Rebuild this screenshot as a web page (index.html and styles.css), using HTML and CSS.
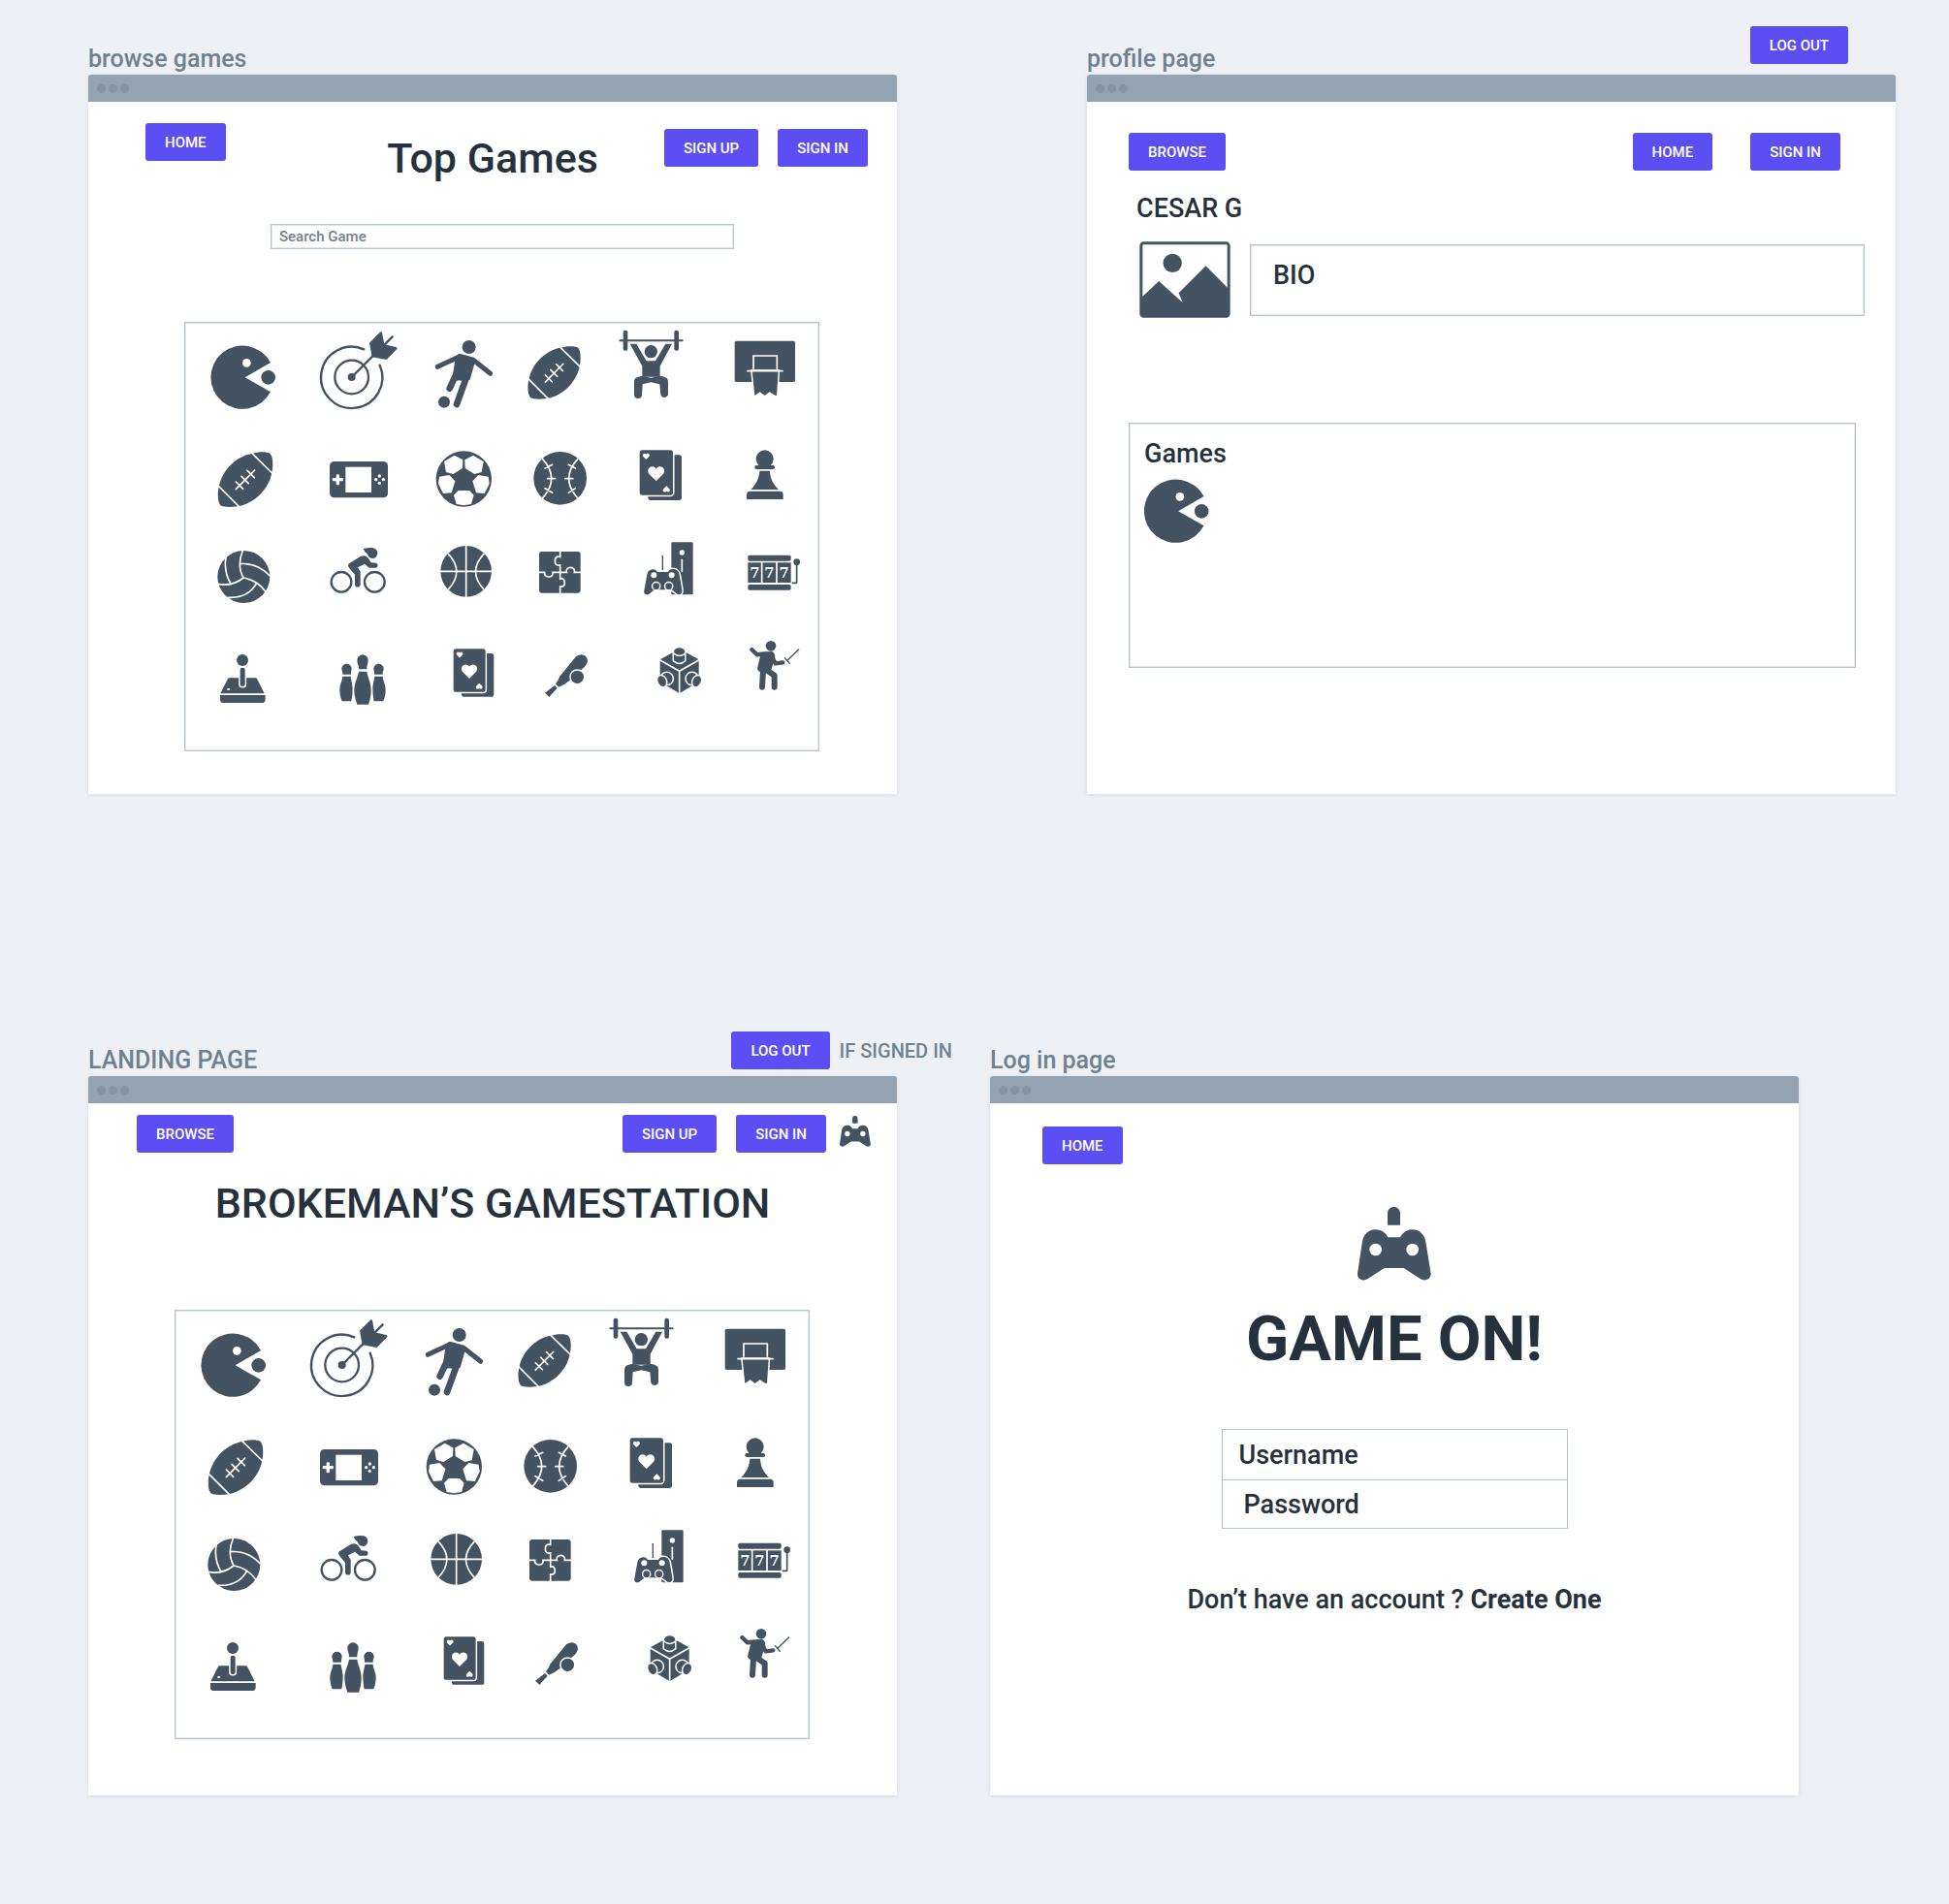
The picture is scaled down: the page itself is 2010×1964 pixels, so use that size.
FILE: index.html
```html
<!DOCTYPE html>
<html lang="en">
<head>
<meta charset="utf-8">
<meta name="viewport" content="width=device-width, initial-scale=1">
<title>Brokeman's Gamestation wireframes</title>
<link rel="stylesheet" href="styles.css">
</head>
<body>
<svg class="sprite" aria-hidden="true">
  <defs>
    <g id="football-shape">
      <path d="M243 443C260 437 285 437 295 443C305 452 306 480 301 503C290 560 240 600 196 607C170 611 150 609 142 604C132 592 133 560 138 543C150 490 195 450 243 443Z"/>
      <path class="cut" d="M240 443L302 504M136 544L199 607M190 554L248 495M190 531L212 553M207 514L229 536M225 496L247 518"/>
    </g>
    <path id="heart-shape" d="M500 529L479 508C470 498 477 484 488 484C494 484 498 487 500 491C502 487 506 484 512 484C523 484 531 498 521 508Z"/>
    <g id="cards-shape">
      <rect x="475" y="448" width="104" height="140" rx="8"/>
      <rect class="lift" x="449" y="433" width="103" height="139" rx="8"/>
      <g fill="#fff">
        <use href="#heart-shape"/>
        <use href="#heart-shape" transform="translate(259 240) scale(.42)"/>
        <use href="#heart-shape" transform="translate(742 766) scale(-.42)"/>
      </g>
    </g>
    <g id="pin-shape">
      <path d="M520 467C521 458 517 455 517 449a15 14 0 0 1 31 0C548 455 545 458 546 467Z"/>
      <path d="M520 473H545C546 485 550 492 551 510C551 525 549 540 547 550H518C514 540 511 528 511 515C511 498 519 487 520 473Z"/>
    </g>
    <g id="stud-shape">
      <circle class="lift" cx="533" cy="480" r="18"/>
      <ellipse class="lift" cx="518" cy="488" rx="12" ry="17" transform="rotate(-25 518 488)"/>
    </g>
    <g id="muncher-shape">
      <path d="M297 162A98 98 0 1 0 297 253L218 208Z"/>
      <circle cx="290" cy="208" r="22"/>
      <circle cx="223" cy="163" r="13" fill="#fff"/>
    </g>
    <g id="slots-shape">
      <rect x="784" y="98" width="133" height="18" rx="5"/>
      <rect x="784" y="121" width="133" height="62"/>
      <rect x="784" y="189" width="133" height="17" rx="5"/>
      <path class="cut" stroke-width="5" d="M827 121V183M873 121V183"/>
      <circle cx="935" cy="119" r="10"/>
      <path class="line" stroke-width="5" d="M935 128V184H922"/>
    </g>
  </defs>

  <symbol id="muncher" viewBox="33 39 348 330"><use href="#muncher-shape"/></symbol>
  <symbol id="muncher-tight" viewBox="113 108 200 198"><use href="#muncher-shape"/></symbol>

  <symbol id="target" viewBox="381 39 366 330">
    <path class="line" stroke-width="7" d="M635 170A95 95 0 1 1 586 121M548 207L616 139"/>
    <circle class="line" stroke-width="7" cx="548" cy="207" r="52"/>
    <circle cx="548" cy="207" r="12"/>
    <path d="M603 101L637 67Q641 65 642 70L649 106L685 114Q691 117 688 120L656 153L611 145Z"/>
    <path class="line" stroke-width="7" d="M650 106L674 82"/>
  </symbol>

  <symbol id="footballer" viewBox="747 39 294 330">
    <circle cx="911" cy="114" r="21"/>
    <circle cx="834" cy="284" r="18"/>
    <path d="M878 135Q883 134 888 136L926 146Q932 150 930 158L914 215L888 218L880 217L858 222L867 160Z"/>
    <path class="line" stroke-width="15" d="M882 143L814 175M924 154L977 196"/>
    <path class="line" stroke-width="20" d="M875 190L851 242M904 205L873 291"/>
  </symbol>

  <symbol id="football-small" viewBox="51 39 276 330"><use href="#football-shape" transform="translate(-25.6 -309.5) scale(.96)"/></symbol>

  <symbol id="weightlifter" viewBox="327 39 336 330">
    <path class="line" stroke-width="6" d="M388 94H581"/>
    <rect x="398" y="62" width="14" height="63" rx="6"/>
    <rect x="556" y="62" width="14" height="63" rx="6"/>
    <circle cx="484" cy="128" r="20"/>
    <path d="M419 104H439L470 157H498L529 104H549L512 173V206H457V173Z"/>
    <path d="M457 204C438 206 432 210 432 225V262a12 11 0 0 0 24 0L458 229L484 223L511 229L514 262a12 11 0 0 0 23 0V222C537 210 530 206 512 203L484 209Z"/>
  </symbol>

  <symbol id="hoop" viewBox="663 39 339 330">
    <rect x="743" y="95" width="187" height="127" rx="5"/>
    <path class="cut" stroke-width="6" d="M801 181V141H874V181"/>
    <path class="lift" d="M797 188H878L873 264L868 263L851 253L836 264L821 253L805 264Z"/>
    <path class="cut" stroke-width="7" d="M783 188H891"/>
  </symbol>

  <symbol id="football" viewBox="33 369 348 300"><use href="#football-shape"/></symbol>

  <symbol id="handheld" viewBox="381 369 366 300">
    <rect x="480" y="468" width="180" height="112" rx="14"/>
    <g fill="#fff">
      <rect x="529" y="485" width="80" height="79"/>
      <rect x="488" y="519" width="34" height="10" rx="4"/>
      <rect x="500" y="508" width="10" height="33" rx="4"/>
      <circle cx="634" cy="513" r="5"/><circle cx="634" cy="535" r="5"/>
      <circle cx="623" cy="524" r="5"/><circle cx="646" cy="524" r="5"/>
    </g>
  </symbol>

  <symbol id="soccer" viewBox="747 369 294 300">
    <circle cx="895" cy="522" r="86"/>
    <g fill="#fff">
      <path id="patch-a" d="M834 468L866 449L892 463L891 489L862 507L840 501Z"/>
      <path id="patch-b" d="M819 515L850 510L868 529L857 565L831 567L816 537Z"/>
      <use href="#patch-a" transform="translate(1790) scale(-1 1)"/>
      <use href="#patch-b" transform="translate(1790) scale(-1 1)"/>
      <path d="M878 558H912L926 572L918 600L895 604L872 600L864 572Z"/>
    </g>
  </symbol>

  <symbol id="baseball" viewBox="51 369 276 300">
    <circle cx="203" cy="520" r="82"/>
    <path class="cut" d="M149 461Q203 520 149 581M257 461Q203 520 257 581M164 521H188M218 521H242M156 489L179 478M156 551L179 565M250 489L229 478M250 551L229 565"/>
  </symbol>

  <symbol id="cards" viewBox="327 369 336 300"><use href="#cards-shape"/></symbol>

  <symbol id="pawn" viewBox="663 369 339 300">
    <circle cx="836" cy="460" r="27"/>
    <rect x="805" y="480" width="62" height="12" rx="5"/>
    <path d="M820 497H852C853 525 865 540 879 555H793C808 540 819 520 820 497Z"/>
    <path d="M780 585V571Q780 560 791 560H882Q893 560 893 571V585Z"/>
  </symbol>

  <symbol id="volleyball" viewBox="33 9 348 300">
    <circle cx="214" cy="165" r="81"/>
    <path class="cut" d="M211 84Q192 130 213 168M203 125Q255 120 295 162M160 99Q150 145 174 187M137 188Q180 195 213 168M213 168Q255 175 281 210M254 184Q228 232 166 229"/>
  </symbol>

  <symbol id="cyclist" viewBox="381 9 366 300">
    <circle class="line" stroke-width="7" cx="516" cy="181" r="31"/>
    <circle class="line" stroke-width="7" cx="619" cy="181" r="31"/>
    <path d="M584 78Q600 74 615 76Q628 80 628 92Q626 108 612 108Q600 106 597 95Q588 90 584 78Z"/>
    <path d="M538 125L575 102Q590 96 598 106L608 121L624 122a7 8 0 0 1 0 15L602 137L588 125L567 136L575 150V188a8 8 0 0 1-17 0V158L541 139Q535 131 538 125Z"/>
  </symbol>

  <symbol id="basketball" viewBox="747 9 294 300">
    <circle cx="902" cy="148" r="79"/>
    <path class="cut" d="M902 68V228M822 148H982M847 94Q898 148 847 204M957 94Q906 148 957 204"/>
  </symbol>

  <symbol id="puzzle" viewBox="51 9 276 300">
    <rect x="138" y="87" width="128" height="128" rx="9"/>
    <path class="cut" d="M203 86V103C190 100 187 108 187 117C187 128 195 131 203 129V172C212 168 217 175 217 184C217 193 210 197 203 195V216M137 151H155C153 160 160 165 168 165C177 165 182 159 180 151H223C220 142 227 136 235 136C244 136 249 143 247 151H267"/>
  </symbol>

  <symbol id="console" viewBox="327 9 336 300">
    <rect x="547" y="58" width="67" height="162" rx="3"/>
    <path class="cut" stroke-width="4" d="M580 112V148"/>
    <circle cx="580" cy="90" r="8" fill="#fff"/>
    <path class="line" stroke-width="4" d="M520 100V143"/>
    <path class="lift" d="M484 143C495 140 501 145 504 150H537C540 143 548 139 559 142C568 146 570 150 572 158L580 205C582 216 575 222 566 219L548 205H495L477 219C468 223 460 216 463 207L472 158C474 148 478 145 484 143Z"/>
    <circle cx="493" cy="160" r="9" fill="#fff"/><circle cx="548" cy="160" r="9" fill="#fff"/>
    <circle class="lift" cx="500" cy="194" r="10"/><circle class="lift" cx="539" cy="194" r="10"/>
  </symbol>

  <symbol id="joystick" viewBox="33 309 348 393">
    <circle cx="210" cy="423" r="18"/>
    <path d="M170 478H250Q254 478 256 482L278 526H142L164 482Q166 478 170 478Z"/>
    <rect class="lift" x="203" y="446" width="15" height="58" rx="7"/>
    <ellipse cx="167" cy="513" rx="5" ry="3" fill="#fff"/>
    <path d="M141 531H281V545Q280 555 270 555H152Q141 555 141 545Z"/>
  </symbol>

  <symbol id="bowling" viewBox="381 309 366 393">
    <use href="#pin-shape"/>
    <use href="#pin-shape" transform="translate(1164) scale(-1 1)"/>
    <path d="M570 451C571 440 565 434 565 423a17 17 0 0 1 34 0C599 434 594 440 595 451Z"/>
    <path class="lift" d="M570 458H595C597 476 608 490 608 517C608 535 604 548 600 560H565C561 548 556 535 556 517C556 490 568 476 570 458Z"/>
  </symbol>

  <symbol id="cards-small" viewBox="747 309 294 393"><use href="#cards-shape" transform="translate(432 -28) scale(.96)"/></symbol>

  <symbol id="cricket" viewBox="51 309 276 393">
    <path d="M186 501L194 509L169 537L156 524Z"/>
    <path d="M189 496Q196 488 203 472L252 412Q268 400 282 410Q294 424 281 441L232 486Q218 499 198 506Z"/>
    <circle class="lift" cx="256" cy="475" r="20"/>
  </symbol>

  <symbol id="brick" viewBox="327 309 336 393">
    <path d="M572 388L632 421V490L572 526L512 490V421Z"/>
    <path class="cut" d="M511 422L572 457L633 422M572 457V527"/>
    <path class="lift" d="M555 396H588V424Q572 438 555 424Z"/>
    <ellipse class="lift" cx="572" cy="396" rx="17" ry="11"/>
    <use href="#stud-shape"/>
    <use href="#stud-shape" transform="translate(1144) scale(-1 1)"/>
  </symbol>

  <symbol id="fencer" viewBox="663 309 339 393">
    <circle cx="855" cy="379" r="16"/>
    <path d="M808 399L858 396Q868 400 868 414L856 452L830 464Q812 456 813 448L822 412Z"/>
    <path class="line" stroke-width="13" d="M796 390L812 406L845 403M858 412L869 433L892 430"/>
    <path class="line" stroke-width="18" d="M831 455L828 506M842 454L866 470V506"/>
    <path class="line" stroke-width="4" d="M904 425L941 390M898 416L913 433"/>
  </symbol>

  <symbol id="gamepad" viewBox="600 74 228 228">
    <path d="M693 130V93a19 19 0 0 1 39 0V130Z"/>
    <path d="M694 168H732C740 152 754 144 770 144C792 144 808 160 811 182L827 280C828 295 812 306 795 297L743 263H683L631 297C616 306 598 295 600 280L615 180C618 160 634 144 655 144C672 144 686 152 694 168Z"/>
    <circle cx="656" cy="206" r="19" fill="#fff"/>
    <circle cx="770" cy="206" r="19" fill="#fff"/>
  </symbol>

  <symbol id="picture" viewBox="195 687 281 237">
    <rect class="line" stroke-width="9" x="200" y="692" width="271" height="227" rx="8"/>
    <circle cx="297" cy="754" r="29"/>
    <path d="M200 862L255 810L329 877L316 847L400 763L470 833V919H200Z"/>
  </symbol>
</svg>

<main class="canvas">
  <div class="board-row board-row-top">
    <section class="board" aria-labelledby="browse-label">
      <header class="board-head"><h2 class="board-label" id="browse-label">browse games</h2></header>
      <div class="window">
        <div class="window-bar"><i></i><i></i><i></i></div>
        <div class="window-body browse">
          <div class="browse-head">
            <button class="btn">HOME</button>
            <h1 class="title">Top Games</h1>
            <nav class="actions"><button class="btn">SIGN UP</button><button class="btn">SIGN IN</button></nav>
          </div>
          <input class="search" type="search" placeholder="Search Game" aria-label="Search Game">
          <div class="games-grid">
            <svg><use href="#muncher"/></svg>
            <svg><use href="#target"/></svg>
            <svg><use href="#footballer"/></svg>
            <svg><use href="#football-small"/></svg>
            <svg><use href="#weightlifter"/></svg>
            <svg><use href="#hoop"/></svg>
            <svg><use href="#football"/></svg>
            <svg><use href="#handheld"/></svg>
            <svg><use href="#soccer"/></svg>
            <svg><use href="#baseball"/></svg>
            <svg><use href="#cards"/></svg>
            <svg><use href="#pawn"/></svg>
            <svg><use href="#volleyball"/></svg>
            <svg><use href="#cyclist"/></svg>
            <svg><use href="#basketball"/></svg>
            <svg><use href="#puzzle"/></svg>
            <svg><use href="#console"/></svg>
            <svg viewBox="663 9 339 300"><use href="#slots-shape"/><text class="reel" x="805" y="168">7</text><text class="reel" x="850" y="168">7</text><text class="reel" x="896" y="168">7</text></svg>
            <svg><use href="#joystick"/></svg>
            <svg><use href="#bowling"/></svg>
            <svg><use href="#cards-small"/></svg>
            <svg><use href="#cricket"/></svg>
            <svg><use href="#brick"/></svg>
            <svg><use href="#fencer"/></svg>
          </div>
        </div>
      </div>
    </section>

    <section class="board" aria-labelledby="profile-label">
      <header class="board-head">
        <h2 class="board-label" id="profile-label">profile page</h2>
        <div class="profile-logout"><button class="btn">LOG OUT</button></div>
      </header>
      <div class="window">
        <div class="window-bar"><i></i><i></i><i></i></div>
        <div class="window-body profile">
          <div class="profile-head">
            <button class="btn">BROWSE</button>
            <nav class="actions actions-wide"><button class="btn">HOME</button><button class="btn">SIGN IN</button></nav>
          </div>
          <h1 class="text profile-name">CESAR G</h1>
          <div class="profile-about">
            <svg class="avatar" role="img" aria-label="Profile picture"><use href="#picture"/></svg>
            <div class="bio text">BIO</div>
          </div>
          <section class="owned">
            <h2 class="text">Games</h2>
            <svg class="owned-game"><use href="#muncher-tight"/></svg>
          </section>
        </div>
      </div>
    </section>
  </div>

  <div class="board-row board-row-bottom">
    <section class="board" aria-labelledby="landing-label">
      <header class="board-head">
        <h2 class="board-label" id="landing-label">LANDING PAGE</h2>
        <div class="landing-logout"><button class="btn">LOG OUT</button><span class="note">IF SIGNED IN</span></div>
      </header>
      <div class="window">
        <div class="window-bar"><i></i><i></i><i></i></div>
        <div class="window-body landing">
          <div class="landing-head">
            <button class="btn">BROWSE</button>
            <nav class="actions"><button class="btn">SIGN UP</button><button class="btn">SIGN IN</button></nav>
            <svg class="pad-small"><use href="#gamepad"/></svg>
          </div>
          <h1 class="title">BROKEMAN’S GAMESTATION</h1>
          <div class="games-grid">
            <svg><use href="#muncher"/></svg>
            <svg><use href="#target"/></svg>
            <svg><use href="#footballer"/></svg>
            <svg><use href="#football-small"/></svg>
            <svg><use href="#weightlifter"/></svg>
            <svg><use href="#hoop"/></svg>
            <svg><use href="#football"/></svg>
            <svg><use href="#handheld"/></svg>
            <svg><use href="#soccer"/></svg>
            <svg><use href="#baseball"/></svg>
            <svg><use href="#cards"/></svg>
            <svg><use href="#pawn"/></svg>
            <svg><use href="#volleyball"/></svg>
            <svg><use href="#cyclist"/></svg>
            <svg><use href="#basketball"/></svg>
            <svg><use href="#puzzle"/></svg>
            <svg><use href="#console"/></svg>
            <svg viewBox="663 9 339 300"><use href="#slots-shape"/><text class="reel" x="805" y="168">7</text><text class="reel" x="850" y="168">7</text><text class="reel" x="896" y="168">7</text></svg>
            <svg><use href="#joystick"/></svg>
            <svg><use href="#bowling"/></svg>
            <svg><use href="#cards-small"/></svg>
            <svg><use href="#cricket"/></svg>
            <svg><use href="#brick"/></svg>
            <svg><use href="#fencer"/></svg>
          </div>
        </div>
      </div>
    </section>

    <section class="board" aria-labelledby="login-label">
      <header class="board-head"><h2 class="board-label" id="login-label">Log in page</h2></header>
      <div class="window">
        <div class="window-bar"><i></i><i></i><i></i></div>
        <div class="window-body login">
          <button class="btn login-home">HOME</button>
          <svg class="pad-large"><use href="#gamepad"/></svg>
          <h1 class="hero">GAME ON!</h1>
          <form class="login-form">
            <input class="field text" type="text" placeholder="Username" aria-label="Username">
            <input class="field field-password text" type="password" placeholder="Password" aria-label="Password">
          </form>
          <p class="text signup">Don’t have an account ? <a href="#create">Create One</a></p>
        </div>
      </div>
    </section>
  </div>
</main>
</body>
</html>
```
FILE: styles.css
```css
:root {
  --ink: #25323e;
  --muted: #6f8190;
  --icon: #435362;
  --line: #b6c4d2;
  --line-soft: #e1e7ed;
  --accent: #5b4ff3;
}

* { box-sizing: border-box; }

body {
  margin: 0;
  background: #edf1f6;
  color: var(--ink);
  font-family: Roboto, "Liberation Sans", sans-serif;
  font-weight: 500;
}

h1, h2, p { margin: 0; font-weight: 500; }

.sprite { position: absolute; width: 0; height: 0; }

svg { display: block; color: var(--icon); fill: currentColor; }

.cut { fill: none; stroke: #fff; stroke-width: 5; stroke-linecap: round; }
.line { fill: none; stroke: currentColor; stroke-linecap: round; stroke-linejoin: round; }
.lift { fill: currentColor; stroke: #fff; stroke-width: 9; paint-order: stroke; }
.reel { fill: #fff; font: bold 44px "DejaVu Serif", serif; text-anchor: middle; }

/* Canvas and boards */
.canvas { min-height: 100vh; padding-bottom: 112px; }
.board-row { display: flex; }
.board-row-top { gap: 196px; padding: 27px 55px 0 91px; }
.board-row-bottom { gap: 96px; padding: 241px 155px 0 91px; }
.board { flex: 1 1 0; min-width: 0; display: flex; flex-direction: column; }

.board-head {
  display: flex;
  align-items: flex-end;
  justify-content: space-between;
  height: 50px;
}
.board-label { color: var(--muted); font-size: 25px; line-height: 32px; }
.profile-logout { align-self: flex-start; margin-right: 49px; }
.landing-logout {
  display: flex;
  align-items: center;
  gap: 10px;
  margin: 0 -57px 7px 0;
}
.note { color: var(--muted); font-size: 20px; line-height: 28px; }

.window {
  flex: 1;
  background: #fff;
  border-radius: 3px 3px 0 0;
  box-shadow: 0 1px 4px rgba(67, 83, 98, .14);
}
.window-bar {
  display: flex;
  align-items: center;
  gap: 3px;
  height: 28px;
  padding-left: 9px;
  background: #93a3b1;
  border-radius: 3px 3px 0 0;
}
.window-bar i { width: 9px; height: 9px; border-radius: 50%; background: #8494a3; }

/* Shared controls */
.btn {
  height: 39px;
  padding: 1px 20px 0;
  border: 0;
  border-radius: 3px;
  background: var(--accent);
  color: #fff;
  font: 500 15px/38px Roboto, "Liberation Sans", sans-serif;
  white-space: nowrap;
}
.actions { display: flex; gap: 20px; }
.actions-wide { gap: 39px; }
.title { font-size: 43px; line-height: 54px; text-align: center; }
.text { font-size: 27px; line-height: 36px; }

.games-grid {
  display: grid;
  grid-template-columns: 116fr 122fr 98fr 92fr 112fr 113fr;
  grid-template-rows: 110px 100px 100px 131px;
  border: 1px solid var(--line);
  box-shadow: inset 0 0 0 1px var(--line-soft);
}
.games-grid svg { width: 100%; height: 100%; }

/* Browse games */
.browse { padding-bottom: 44px; }
.browse-head {
  display: grid;
  grid-template-columns: 1fr auto 1fr;
  align-items: start;
  padding: 22px 30px 0;
}
.browse-head > .btn { justify-self: start; margin-left: 29px; }
.browse-head .title { margin-top: 9px; }
.browse-head .actions { justify-self: end; margin-top: 6px; }
.search {
  display: block;
  width: calc(100% - 356px);
  height: 26px;
  margin: 41px 168px 75px 188px;
  padding: 0 8px;
  border: 1px solid var(--line);
  border-radius: 0;
  box-shadow: inset 0 0 0 1px var(--line-soft);
  font: 500 15px/24px Roboto, "Liberation Sans", sans-serif;
  color: var(--ink);
  appearance: none;
}
.search::placeholder { color: var(--muted); opacity: 1; }
.browse .games-grid { margin: 0 80px 0 99px; }

/* Profile */
.profile-head { display: flex; justify-content: space-between; padding: 32px 57px 0 43px; }
.profile-name { margin: 21px 0 0 51px; }
.profile-about {
  display: flex;
  align-items: center;
  gap: 20px;
  margin: 16px 32px 0 54px;
}
.avatar { flex: none; width: 94px; height: 79px; }
.bio {
  flex: 1;
  height: 74px;
  padding: 13px 23px;
  border: 1px solid var(--line);
  box-shadow: inset 0 0 0 1px var(--line-soft);
}
.owned {
  min-height: 253px;
  margin: 108px 41px 0 43px;
  padding: 13px 15px;
  border: 1px solid var(--line);
  box-shadow: inset 0 0 0 1px var(--line-soft);
}
.owned-game { width: 67px; height: 66px; margin-top: 8px; }

/* Landing */
.landing { padding-bottom: 58px; }
.landing-head { display: flex; padding: 12px 27px 0 50px; }
.landing-head .actions { margin-left: auto; }
.pad-small { width: 32px; height: 32px; margin: 1px 0 0 14px; }
.landing .title { margin-top: 25px; }
.landing .games-grid { margin: 83px 90px 0 89px; }

/* Log in */
.login { display: flex; flex-direction: column; align-items: center; padding-top: 24px; }
.login-home { align-self: flex-start; margin-left: 54px; }
.pad-large { width: 76px; height: 76px; margin-top: 44px; }
.hero { margin-top: 20px; font-size: 65px; line-height: 80px; font-weight: 700; }
.login-form {
  display: flex;
  flex-direction: column;
  width: 357px;
  margin-top: 53px;
  border: 1px solid var(--line);
}
.field {
  height: 51px;
  padding: 0 17px;
  border: 0;
  background: none;
  color: var(--ink);
  font-family: inherit;
  font-weight: 500;
}
.field::placeholder { color: var(--ink); opacity: 1; }
.field-password { height: 50px; border-top: 1px solid var(--line); padding-left: 22px; }
.signup { margin-top: 55px; }
.signup a { color: inherit; font-weight: 700; text-decoration: none; }
```
